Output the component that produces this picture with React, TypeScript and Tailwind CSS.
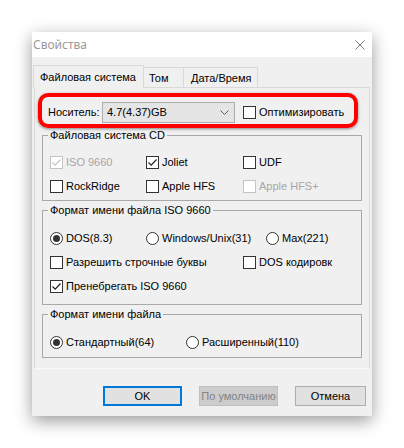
import React from "react";

function Check({ checked = false, disabled = false }: { checked?: boolean; disabled?: boolean }) {
  return (
    <span
      className={
        disabled
          ? "w-[13px] h-[13px] shrink-0 border border-[#c4c4c4] bg-white flex items-center justify-center"
          : "w-[13px] h-[13px] shrink-0 border border-[#333333] bg-white flex items-center justify-center"
      }
    >
      {checked && (
        <svg width="11" height="11" viewBox="0 0 11 11">
          <path
            d="M1.5 5.5 L4.2 8.2 L9.5 2.5"
            fill="none"
            stroke={disabled ? "#c4c4c4" : "#222222"}
            strokeWidth="1.2"
          />
        </svg>
      )}
    </span>
  );
}

function Radio({ checked = false }: { checked?: boolean }) {
  return (
    <span className="w-[13px] h-[13px] shrink-0 rounded-full border border-[#333333] bg-white flex items-center justify-center">
      {checked && <span className="w-[7px] h-[7px] rounded-full bg-[#333333]" />}
    </span>
  );
}

function Item({
  kind,
  checked,
  disabled,
  label,
}: {
  kind: "check" | "radio";
  checked?: boolean;
  disabled?: boolean;
  label: string;
}) {
  return (
    <div className="flex items-center gap-[3px] h-[24px]">
      {kind === "check" ? <Check checked={checked} disabled={disabled} /> : <Radio checked={checked} />}
      <span className={disabled ? "text-[#a6a6a6] whitespace-nowrap" : "text-black whitespace-nowrap"}>{label}</span>
    </div>
  );
}

export default function App() {
  return (
    <div className="w-[404px] h-[448px] bg-white pt-[32px] pl-[32px] font-['Liberation_Sans',Arial,sans-serif] text-[11px] leading-[13px] text-black overflow-hidden">
      <div className="w-[340px] h-[384px] bg-[#f0f0f0] shadow-[0_5px_16px_rgba(0,0,0,0.4)] flex flex-col">
        {/* Title bar */}
        <div className="h-[25px] bg-white flex items-center justify-between pl-[1px] pr-[7px]">
          <span className="font-['Noto_Sans',sans-serif] text-[12px] leading-[16px] text-[#9a9a9a]">Свойства</span>
          <svg width="10" height="10" viewBox="0 0 10 10">
            <path d="M0.5 0.5 L9.5 9.5 M9.5 0.5 L0.5 9.5" stroke="#7a7a7a" strokeWidth="1" fill="none" />
          </svg>
        </div>

        {/* Tabs */}
        <div className="mt-[8px] h-[22px] flex items-end pl-[1px] relative z-10 whitespace-nowrap">
          <div className="h-[23px] w-[111px] -mb-[1px] border border-b-0 border-[#d9d9d9] bg-[#f0f0f0] flex items-center pl-[6px] leading-[14px]">
            Файловая система
          </div>
          <div className="h-[20px] w-[40px] border border-l-0 border-b-0 border-[#d9d9d9] bg-[#f0f0f0] flex items-center pl-[5px] leading-[14px]">
            Том
          </div>
          <div className="h-[20px] w-[74px] border border-l-0 border-b-0 border-[#d9d9d9] bg-[#f0f0f0] flex items-center pl-[7px] leading-[14px]">
            Дата/Время
          </div>
        </div>

        {/* Panel */}
        <div className="ml-[2px] w-[336px] h-[282px] border border-[#d9d9d9] border-b-[#fafafa] bg-[#f0f0f0] flex flex-col">
          {/* Highlighted row */}
          <div className="ml-[3px] mt-[5px] w-[320px] h-[35px] border-[4px] border-[#ff0000] rounded-[10px] shadow-[0_1px_3px_rgba(0,0,0,0.45)]">
            <div className="mt-[5px] h-[21px] flex items-center pl-[6px]">
              <span className="w-[54px]">Носитель:</span>
              <div className="w-[133px] h-[21px] border border-[#adadad] bg-[#e5e5e5] flex items-center justify-between pl-[4px] pr-[5px]">
                <span>4.7(4.37)GB</span>
                <svg width="9" height="5" viewBox="0 0 9 5">
                  <path d="M0.5 0.5 L4.5 4.5 L8.5 0.5" stroke="#606060" fill="none" strokeWidth="1" />
                </svg>
              </div>
              <div className="ml-[8px] flex items-center gap-[3px]">
                <Check />
                <span>Оптимизировать</span>
              </div>
            </div>
          </div>

          {/* Group 1 */}
          <fieldset className="ml-[7px] w-[320px] border border-[#a8a8a8]">
            <legend className="ml-[5px] px-[2px] leading-[14px]">Файловая система CD</legend>
            <div className="pl-[7px] pt-[8px] pb-[2px] grid grid-cols-[96px_97px_1fr]">
              <Item kind="check" checked disabled label="ISO 9660" />
              <Item kind="check" checked label="Joliet" />
              <Item kind="check" label="UDF" />
              <Item kind="check" label="RockRidge" />
              <Item kind="check" label="Apple HFS" />
              <Item kind="check" disabled label="Apple HFS+" />
            </div>
          </fieldset>

          {/* Group 2 */}
          <fieldset className="mt-[2px] ml-[7px] w-[320px] border border-[#a8a8a8]">
            <legend className="ml-[5px] px-[2px] leading-[14px]">Формат имени файла ISO 9660</legend>
            <div className="pl-[7px] pt-[9px] pb-[6px] flex flex-col">
              <div className="flex">
                <div className="w-[96px]">
                  <Item kind="radio" checked label="DOS(8.3)" />
                </div>
                <div className="w-[120px]">
                  <Item kind="radio" label="Windows/Unix(31)" />
                </div>
                <Item kind="radio" label="Max(221)" />
              </div>
              <div className="flex">
                <div className="w-[193px]">
                  <Item kind="check" label="Разрешить строчные буквы" />
                </div>
                <Item kind="check" label="DOS кодировк" />
              </div>
              <Item kind="check" checked label="Пренебрегать ISO 9660" />
            </div>
          </fieldset>

          {/* Group 3 */}
          <fieldset className="mt-[2px] ml-[7px] w-[320px] border border-[#a8a8a8]">
            <legend className="ml-[5px] px-[2px] leading-[14px]">Формат имени файла</legend>
            <div className="pl-[7px] pt-[9px] pb-[3px] flex">
              <div className="w-[136px]">
                <Item kind="radio" checked label="Стандартный(64)" />
              </div>
              <Item kind="radio" label="Расширенный(110)" />
            </div>
          </fieldset>
        </div>

        {/* Buttons */}
        <div className="mt-[17px] flex justify-end pr-[6px] gap-[17px] whitespace-nowrap">
          <button className="w-[79px] h-[20px] border-2 border-[#0078d7] bg-[#e1e1e1] leading-[14px] text-black flex items-center justify-center">
            OK
          </button>
          <button className="w-[79px] h-[20px] border border-[#bfbfbf] bg-[#cccccc] leading-[14px] text-[#838383] flex items-center justify-center">
            По умолчанию
          </button>
          <button className="w-[71px] h-[20px] border border-[#adadad] bg-[#e1e1e1] leading-[14px] text-black flex items-center justify-center">
            Отмена
          </button>
        </div>
      </div>
    </div>
  );
}
